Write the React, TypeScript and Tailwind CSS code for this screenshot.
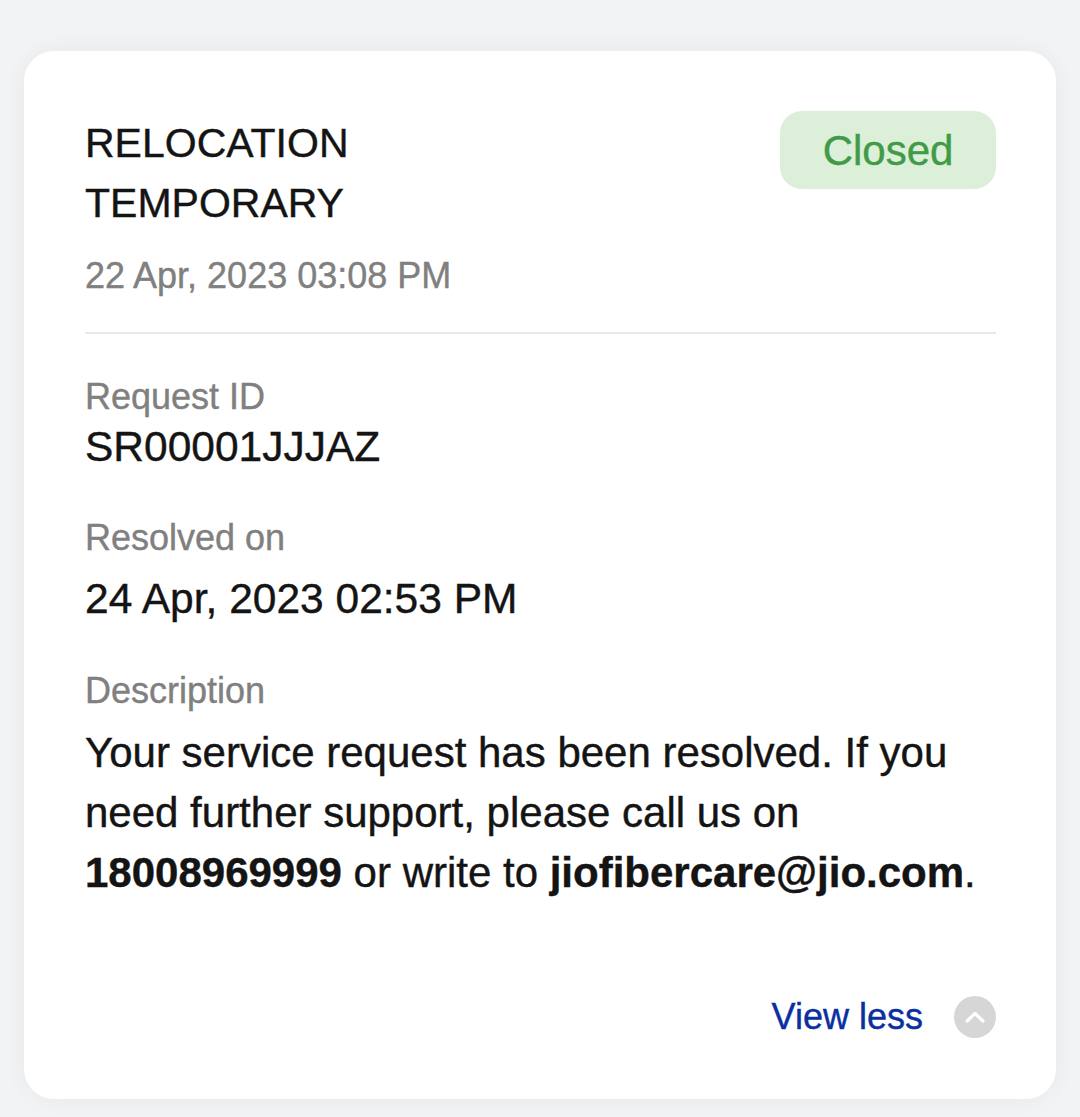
import React from "react";

export default function App() {
  return (
    <div
      className="min-h-screen w-full bg-[#f2f3f5] px-[24px] pt-[51px] pb-[20px]"
      style={{ fontFamily: '"Liberation Sans", Arial, sans-serif' }}
    >
      <div className="rounded-[30px] bg-white pl-[61px] pr-[60px] pt-[62px] pb-[60px] shadow-[0_0_24px_rgba(0,0,0,0.05)] [-webkit-text-stroke:0.4px_currentColor]">
        <div className="flex items-start justify-between">
          <div className="text-[41px] leading-[60px] text-[#141414]">
            <div>RELOCATION</div>
            <div>TEMPORARY</div>
          </div>
          <div className="mt-[-2px] flex h-[78px] w-[216px] items-center justify-center rounded-[22px] bg-[#dcefd9] text-[42px] text-[#3f9b47]">
            Closed
          </div>
        </div>
        <div className="mt-[21px] text-[36px] leading-[44px] text-[#808080]">
          22 Apr, 2023 03:08 PM
        </div>
        <div className="mt-[34px] h-[2px] w-full bg-[#e8e8e8]" />

        <div className="mt-[41px] text-[36px] leading-[44px] text-[#808080]">Request ID</div>
        <div className="mt-[3px] text-[42.5px] leading-[50px] text-[#141414]">SR00001JJJAZ</div>

        <div className="mt-[44px] text-[36px] leading-[44px] text-[#808080]">Resolved on</div>
        <div className="mt-[14px] text-[42.5px] leading-[50px] text-[#141414]">24 Apr, 2023 02:53 PM</div>

        <div className="mt-[45px] text-[36px] leading-[44px] text-[#808080]">Description</div>
        <p className="mt-[10px] text-[42px] leading-[60px] text-[#141414]">
          Your service request has been resolved. If you need further support, please call us on{" "}
          <span className="font-bold">18008969999</span> or write to{" "}
          <span className="font-bold">jiofibercare@jio.com</span>.
        </p>

        <div className="mt-[92px] flex items-center justify-end gap-[31px]">
          <span className="text-[36px] leading-[44px] text-[#0a2f9f]">View less</span>
          <span className="flex h-[42px] w-[42px] items-center justify-center rounded-full bg-[#d6d6d6]">
            <svg width="22" height="14" viewBox="0 0 22 14" fill="none">
              <path d="M3 11 L11 3.5 L19 11" stroke="white" strokeWidth="3.2" strokeLinecap="round" strokeLinejoin="round" />
            </svg>
          </span>
        </div>
      </div>
    </div>
  );
}
